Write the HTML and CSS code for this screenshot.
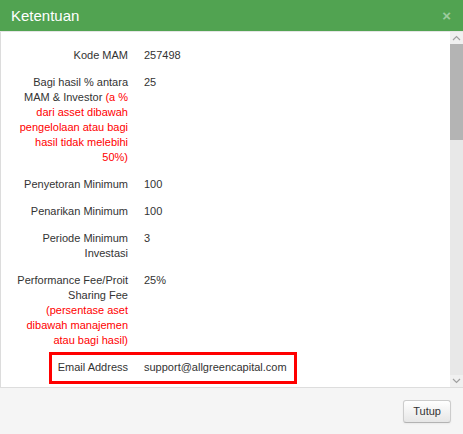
FILE: index.html
```html
<!DOCTYPE html>
<html>
<head>
  <title>Ketentuan</title>
  <link rel="stylesheet" href="styles.css">
</head>
<body>
<div class="modal">
  <div class="modal-header">
    <h3>Ketentuan</h3>
    <span class="close">&times;</span>
  </div>
  <div class="modal-body">
    <div class="terms">
      <div class="row">
        <div class="label">Kode MAM</div>
        <div class="value">257498</div>
      </div>
      <div class="row">
        <div class="label">Bagi hasil % antara MAM &amp; Investor <span class="note">(a % dari asset dibawah pengelolaan atau bagi hasil tidak melebihi 50%)</span></div>
        <div class="value">25</div>
      </div>
      <div class="row">
        <div class="label">Penyetoran Minimum</div>
        <div class="value">100</div>
      </div>
      <div class="row">
        <div class="label">Penarikan Minimum</div>
        <div class="value">100</div>
      </div>
      <div class="row">
        <div class="label">Periode Minimum Investasi</div>
        <div class="value">3</div>
      </div>
      <div class="row">
        <div class="label">Performance Fee/Proit Sharing Fee <span class="note">(persentase aset dibawah manajemen atau bagi hasil)</span></div>
        <div class="value">25%</div>
      </div>
      <div class="row highlight">
        <div class="label">Email Address</div>
        <div class="value">support@allgreencapital.com</div>
      </div>
    </div>
    <div class="scrollbar">
      <div class="sb-btn">
        <svg width="9" height="6" viewBox="0 0 9 6"><path d="M1 5 L4.5 1.5 L8 5" fill="none" stroke="#a0a0a0" stroke-width="1.2"/></svg>
      </div>
      <div class="sb-track"><div class="sb-thumb"></div></div>
      <div class="sb-btn">
        <svg width="9" height="6" viewBox="0 0 9 6"><path d="M1 1 L4.5 4.5 L8 1" fill="none" stroke="#a0a0a0" stroke-width="1.2"/></svg>
      </div>
    </div>
  </div>
  <div class="modal-footer">
    <button>Tutup</button>
  </div>
</div>
</body>
</html>
```

FILE: styles.css
```css
body {
  margin: 0;
  font-family: 'Liberation Sans', Arial, sans-serif;
  font-size: 11px;
  color: #333;
}
.modal {
  width: 463px;
  height: 434px;
  display: flex;
  flex-direction: column;
  background: #fff;
}
.modal-header {
  height: 31px;
  background: #51a351;
  border-bottom: 1px solid #e5e5e5;
  display: flex;
  align-items: center;
  justify-content: space-between;
  padding: 0 12px 0 11px;
}
.modal-header h3 {
  margin: 0;
  color: #fff;
  font-weight: normal;
  font-size: 15px;
}
.close {
  color: rgba(255,255,255,0.45);
  font-weight: bold;
  font-size: 15px;
}
.modal-body {
  height: 355px;
  display: flex;
  border-left: 1px solid #dcdcdc;
}
.terms {
  flex: 1;
  padding: 10px 15px 0 15px;
}
.row {
  display: grid;
  grid-template-columns: 112px 1fr;
  column-gap: 16px;
  padding: 6px 0;
  line-height: 15px;
}
.label {
  text-align: right;
}
.note {
  color: #ff0000;
}
.highlight {
  position: relative;
}
.highlight:after {
  content: "";
  position: absolute;
  left: 33px;
  top: -2px;
  width: 242px;
  height: 26px;
  border: 3px solid #ff0000;
}
.scrollbar {
  width: 13px;
  display: flex;
  flex-direction: column;
  background: #e8e8e8;
}
.sb-btn {
  height: 12px;
  display: flex;
  align-items: center;
  justify-content: center;
  background: #f0f0f0;
}
.sb-track {
  flex: 1;
}
.sb-thumb {
  height: 96px;
  background: #b4b4b4;
}
.modal-footer {
  flex: 1;
  background: #f5f5f5;
  border-top: 1px solid #dddddd;
  display: flex;
  align-items: center;
  justify-content: flex-end;
  padding: 0 12px;
}
button {
  font-family: 'Liberation Sans', Arial, sans-serif;
  font-size: 11px;
  color: #333;
  height: 23px;
  padding: 0 9px;
  background: linear-gradient(#ffffff, #e6e6e6);
  border: 1px solid #cccccc;
  border-bottom-color: #b3b3b3;
  border-radius: 3px;
  box-shadow: inset 0 1px 0 rgba(255,255,255,0.2), 0 1px 2px rgba(0,0,0,0.05);
}
```
